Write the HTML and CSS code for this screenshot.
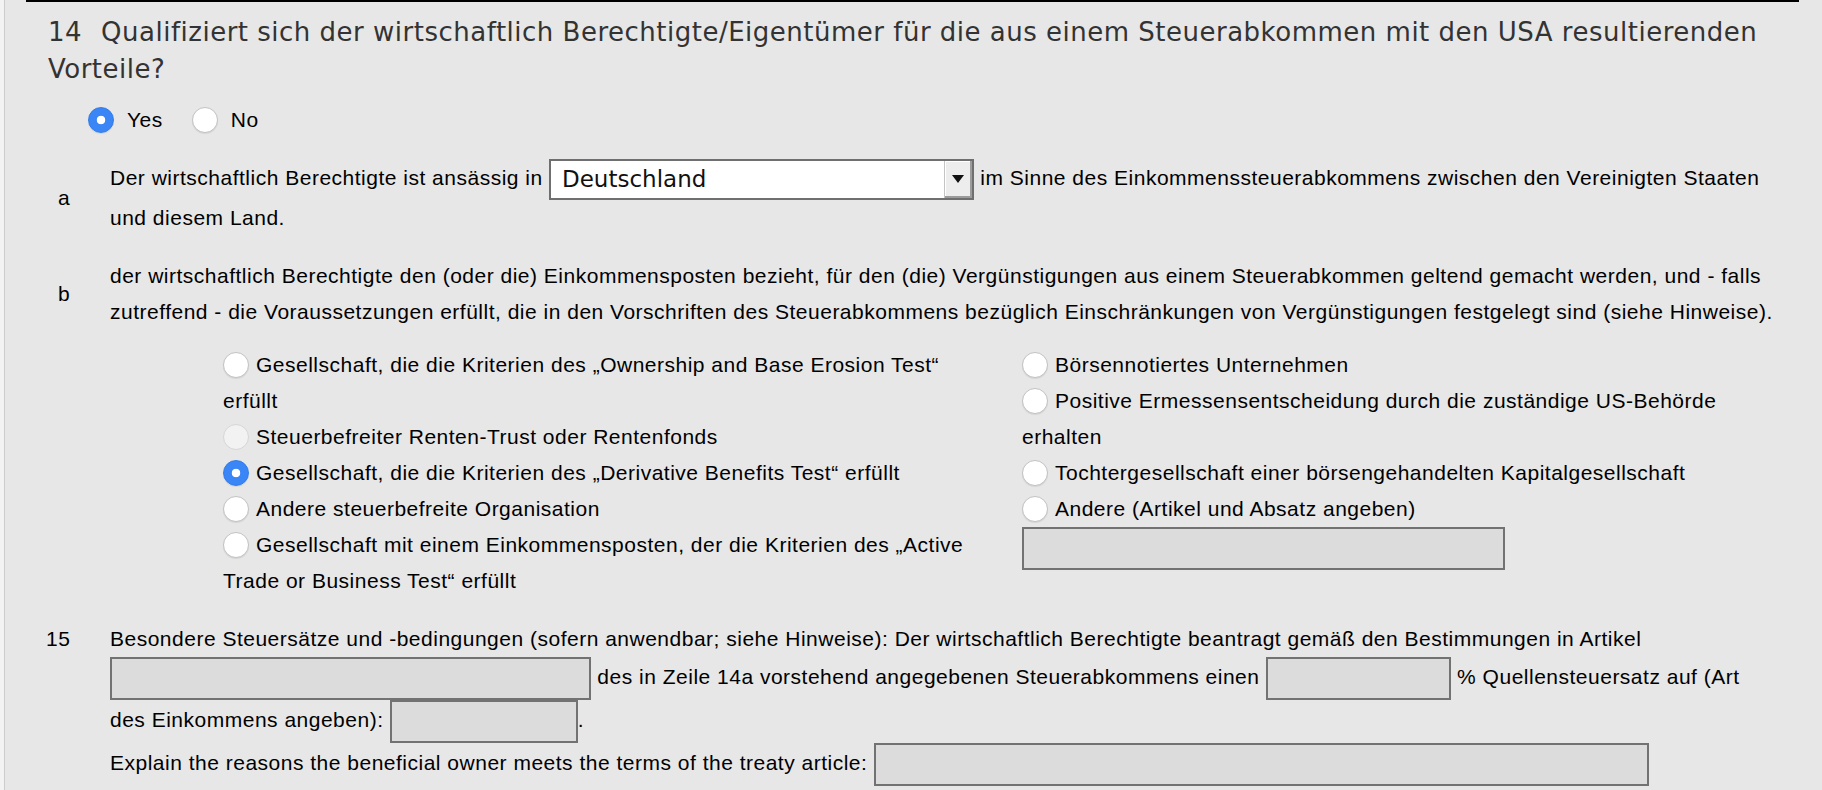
FILE: index.html
```html
<!DOCTYPE html>
<html lang="de">
<head>
    <meta charset="UTF-8">
    <title>Teil III - Inanspruchnahme von Abkommensvergünstigungen</title>
    <link rel="stylesheet" href="styles.css">
</head>
<body>
    <div class="page">
        <div class="question q14">
            <h2 class="q-title"><span class="q-num">14</span>Qualifiziert sich der wirtschaftlich Berechtigte/Eigentümer für die aus einem Steuerabkommen mit den USA resultierenden Vorteile?</h2>

            <div class="yes-no">
                <label><input type="radio" name="q14" checked>Yes</label>
                <label><input type="radio" name="q14">No</label>
            </div>

            <div class="sub-row">
                <div class="sub-label">a</div>
                <div class="sub-text">Der wirtschaftlich Berechtigte ist ansässig in <span class="combo"><span class="combo-value">Deutschland</span><span class="combo-btn"></span></span> im Sinne des Einkommenssteuerabkommens zwischen den Vereinigten Staaten und diesem Land.</div>
            </div>

            <div class="sub-row row-b">
                <div class="sub-label">b</div>
                <div class="sub-text">der wirtschaftlich Berechtigte den (oder die) Einkommensposten bezieht, für den (die) Vergünstigungen aus einem Steuerabkommen geltend gemacht werden, und - falls zutreffend - die Voraussetzungen erfüllt, die in den Vorschriften des Steuerabkommens bezüglich Einschränkungen von Vergünstigungen festgelegt sind (siehe Hinweise).</div>
            </div>

            <div class="options">
                <div class="opt-col">
                    <label class="opt"><input type="radio" name="lob">Gesellschaft, die die Kriterien des „Ownership and Base Erosion Test“ erfüllt</label>
                    <label class="opt"><input type="radio" name="lob" disabled>Steuerbefreiter Renten-Trust oder Rentenfonds</label>
                    <label class="opt"><input type="radio" name="lob" checked>Gesellschaft, die die Kriterien des „Derivative Benefits Test“ erfüllt</label>
                    <label class="opt"><input type="radio" name="lob">Andere steuerbefreite Organisation</label>
                    <label class="opt"><input type="radio" name="lob">Gesellschaft mit einem Einkommensposten, der die Kriterien des „Active Trade or Business Test“ erfüllt</label>
                </div>
                <div class="opt-col">
                    <label class="opt"><input type="radio" name="lob">Börsennotiertes Unternehmen</label>
                    <label class="opt"><input type="radio" name="lob">Positive Ermessensentscheidung durch die zuständige US-Behörde erhalten</label>
                    <label class="opt"><input type="radio" name="lob">Tochtergesellschaft einer börsengehandelten Kapitalgesellschaft</label>
                    <label class="opt"><input type="radio" name="lob">Andere (Artikel und Absatz angeben)</label>
                    <input type="text" class="field w-other">
                </div>
            </div>
        </div>

        <div class="question q15">
            <div class="q15-num">15</div>
            <div class="q15-text">Besondere Steuersätze und -bedingungen (sofern anwendbar; siehe Hinweise): Der wirtschaftlich Berechtigte beantragt gemäß den Bestimmungen in Artikel <input type="text" class="field w-article"> des in Zeile 14a vorstehend angegebenen Steuerabkommens einen <input type="text" class="field w-rate"> % Quellensteuersatz auf (Art des Einkommens angeben): <input type="text" class="field w-income">.<br>Explain the reasons the beneficial owner meets the terms of the treaty article: <input type="text" class="field w-explain"></div>
        </div>
    </div>
</body>
</html>
```

FILE: styles.css
```css
body {
    margin: 0;
    background-color: #f3f3f3;
    font-family: "Liberation Sans", Arial, sans-serif;
    font-size: 21px;
    letter-spacing: 0.5px;
    color: #000;
}
.page {
    margin-left: 4px;
    border-left: 1px solid #cdcdcd;
    background-color: #e7e7e7;
    min-height: 100vh;
    padding: 0 23px 0 21px;
}
.q14 {
    border-top: 2px solid #000;
    padding: 12px 18px 0 22px;
}
.q-title {
    margin: 0;
    font-family: "DejaVu Sans", sans-serif;
    font-size: 26px;
    font-weight: normal;
    line-height: 37px;
    letter-spacing: 0.5px;
    color: #333;
}
.q-num {
    margin-right: 19px;
}
.yes-no {
    display: flex;
    gap: 29px;
    margin-top: 14px;
    padding-left: 40px;
    line-height: 36px;
}
.yes-no input[type="radio"] {
    margin-right: 13px;
}
.sub-row {
    display: grid;
    grid-template-columns: 62px 1fr;
    align-items: center;
    margin-top: 21px;
    line-height: 36px;
}
.row-b {
    margin-top: 22px;
}
.sub-label {
    padding-left: 10px;
}
.combo {
    display: inline-flex;
    box-sizing: border-box;
    width: 425px;
    height: 41px;
    border: 2px solid #6f6f6f;
    background-color: #fff;
    vertical-align: middle;
    letter-spacing: 0;
}
.combo-value {
    flex: 1;
    padding-left: 11px;
    font-family: "DejaVu Sans", sans-serif;
    font-size: 23px;
    line-height: 37px;
    color: #111;
}
.combo-btn {
    width: 27px;
    display: flex;
    align-items: center;
    justify-content: center;
    background-color: #ededed;
    border-left: 1px solid #c4c4c4;
    box-shadow: inset -2px -2px 0 #9c9c9c, inset 1px 1px 0 #fff;
}
.combo-btn:before {
    content: "";
    border-left: 6px solid transparent;
    border-right: 6px solid transparent;
    border-top: 8px solid #111;
    margin: -2px 2px 0 0;
}
.options {
    display: grid;
    grid-template-columns: 762px 1fr;
    column-gap: 37px;
    margin: 17px 0 0 175px;
    line-height: 36px;
}
.opt {
    display: block;
}
input[type="radio"] {
    -webkit-appearance: none;
    appearance: none;
    box-sizing: border-box;
    width: 26px;
    height: 26px;
    margin: 0 7px 0 0;
    border: 1px solid #c2c2c2;
    border-radius: 50%;
    background-color: #fff;
    box-shadow: 0 1px 1px rgba(0, 0, 0, 0.08);
    vertical-align: -6px;
}
input[type="radio"]:checked {
    border-color: #3279e8;
    background: radial-gradient(circle, #fff 0 4px, #3a86f6 4.6px);
}
input[type="radio"]:disabled {
    border-color: #d6d6d6;
    background-color: #f2f2f2;
    box-shadow: none;
}
.field {
    box-sizing: border-box;
    height: 43px;
    margin: 0;
    padding: 0 6px;
    border: 2px solid #727272;
    background-color: #dcdcdc;
    font: inherit;
    vertical-align: middle;
}
.w-other {
    display: block;
    width: 483px;
}
.w-article {
    width: 481px;
}
.w-rate {
    width: 185px;
}
.w-income {
    width: 188px;
}
.w-explain {
    width: 775px;
}
.q15 {
    display: grid;
    grid-template-columns: 64px 1fr;
    margin-top: 21px;
    padding: 0 27px 0 20px;
    line-height: 37px;
}
```
